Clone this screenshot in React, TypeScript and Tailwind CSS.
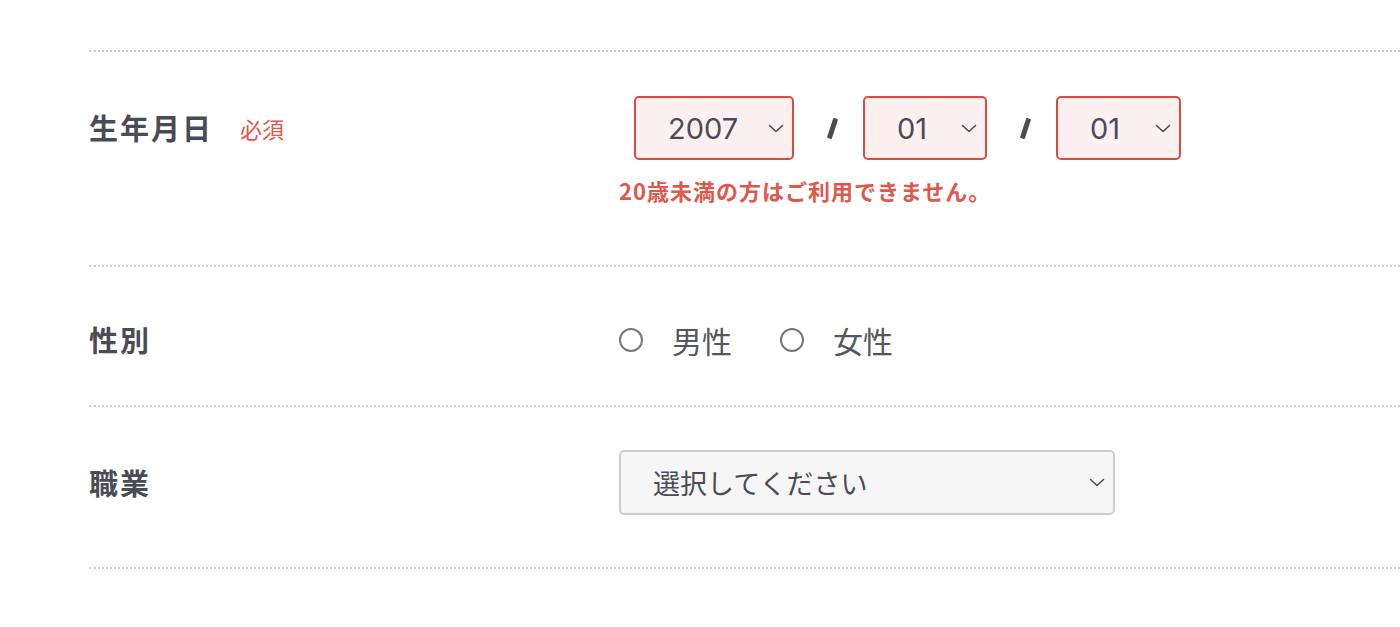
const jp = { fontFamily: '"Noto Sans CJK JP", "Noto Sans", sans-serif' }

function Chevron({ className = '' }: { className?: string }) {
  return (
    <svg viewBox="0 0 16 9" className={className} fill="none" stroke="currentColor" strokeWidth="1.6" strokeLinecap="round" strokeLinejoin="round">
      <path d="M1.5 1.5 8 7.5l6.5-6" />
    </svg>
  )
}

function DateSelect({ value, width }: { value: string; width: string }) {
  return (
    <div className={`${width} h-[64px] flex items-center justify-between pl-[32px] pr-[8px] rounded-[5px] border-2 border-[#dc4a3f] bg-[#fdf0f0] text-[#4a4b57]`}>
      <span className="text-[29px] leading-none" style={{ fontFamily: 'Inter, "Noto Sans", sans-serif' }}>{value}</span>
      <Chevron className="w-[16px] h-[9px]" />
    </div>
  )
}

function Slash() {
  return (
    <div className="w-[69px] flex justify-center pl-[8px]">
      <span className="block w-[5px] h-[21px] rounded-[1px] bg-[#4a4b57] rotate-[18deg]" />
    </div>
  )
}

function Radio({ label }: { label: string }) {
  return (
    <label className="flex items-center gap-[29px]">
      <span className="w-[24px] h-[24px] rounded-full border-2 border-[#777]" />
      <span className="text-[30px] text-[#55565f] leading-none">{label}</span>
    </label>
  )
}

export default function App() {
  return (
    <div className="min-h-screen bg-white" style={jp}>
      <div className="pl-[89px] pt-[50px]">
        <div className="border-t-2 border-dotted border-[#cfcfcf]">
          {/* 生年月日 */}
          <div className="flex pt-[44px] pb-[59px] border-b-2 border-dotted border-[#cfcfcf]">
            <div className="w-[530px] h-[64px] flex items-center gap-[27px]">
              <span className="text-[29px] font-bold tracking-[2px] text-[#4b4b56]">生年月日</span>
              <span className="text-[22px] text-[#e0574c]">必須</span>
            </div>
            <div>
              <div className="flex items-center pl-[15px]">
                <DateSelect value="2007" width="w-[160px]" />
                <Slash />
                <DateSelect value="01" width="w-[124px]" />
                <Slash />
                <DateSelect value="01" width="w-[125px]" />
              </div>
              <p className="mt-[14px] text-[22px] font-bold tracking-[1px] text-[#e0574c] leading-[32px]">20歳未満の方はご利用できません。</p>
            </div>
          </div>

          {/* 性別 */}
          <div className="flex pt-[49px] pb-[41px] border-b-2 border-dotted border-[#cfcfcf]">
            <div className="w-[530px] h-[48px] flex items-center">
              <span className="text-[29px] font-bold tracking-[2px] text-[#4b4b56]">性別</span>
            </div>
            <div className="h-[48px] flex items-center gap-[48px]">
              <Radio label="男性" />
              <Radio label="女性" />
            </div>
          </div>

          {/* 職業 */}
          <div className="flex pt-[43px] pb-[52px] border-b-2 border-dotted border-[#cfcfcf]">
            <div className="w-[530px] h-[65px] flex items-center">
              <span className="text-[29px] font-bold tracking-[2px] text-[#4b4b56]">職業</span>
            </div>
            <div className="w-[496px] h-[65px] flex items-center justify-between pl-[32px] pr-[8px] rounded-[5px] border-2 border-[#cdcdcd] bg-[#f6f6f6] text-[#4a4b57]">
              <span className="text-[27px] leading-none">選択してください</span>
              <Chevron className="w-[16px] h-[9px]" />
            </div>
          </div>
        </div>
      </div>
    </div>
  )
}
